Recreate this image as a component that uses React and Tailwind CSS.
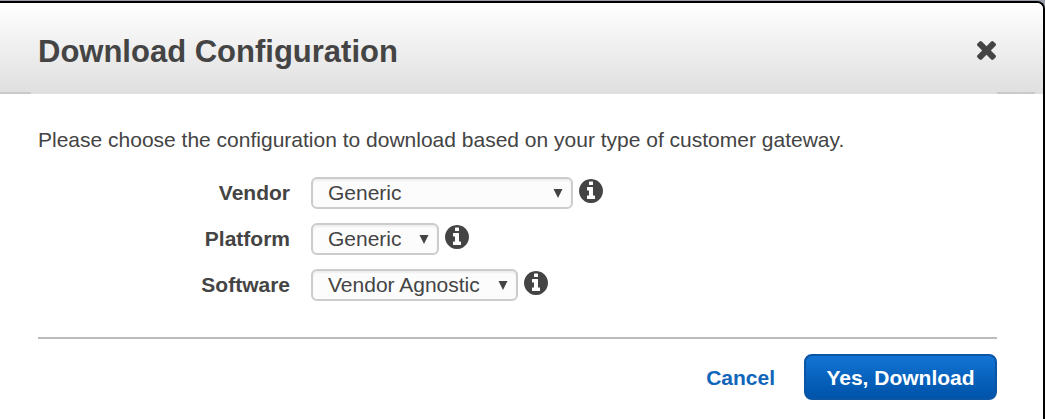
import React from "react";

function CloseIcon() {
  return (
    <svg viewBox="302 366 1188 1188" className="size-[19px] fill-current" aria-hidden="true">
      <path d="M1490 1322q0 40-28 68l-136 136q-28 28-68 28t-68-28l-294-294-294 294q-28 28-68 28t-68-28l-136-136q-28-28-28-68t28-68l294-294-294-294q-28-28-28-68t28-68l136-136q28-28 68-28t68 28l294 294 294-294q28-28 68-28t68 28l136 136q28 28 28 68t-28 68l-294 294 294 294q28 28 28 68z" />
    </svg>
  );
}

function InfoIcon() {
  return (
    <svg viewBox="128 128 1536 1536" className="size-6 fill-current" aria-hidden="true">
      <path d="M1152 1376v-160q0-14-9-23t-23-9h-96v-512q0-14-9-23t-23-9h-320q-14 0-23 9t-9 23v160q0 14 9 23t23 9h96v320h-96q-14 0-23 9t-9 23v160q0 14 9 23t23 9h448q14 0 23-9t9-23zm-128-896v-160q0-14-9-23t-23-9h-192q-14 0-23 9t-9 23v160q0 14 9 23t23 9h192q14 0 23-9t9-23zm640 416q0 209-103 385.5t-279.5 279.5-385.5 103-385.5-103-279.5-279.5-103-385.5 103-385.5 279.5-279.5 385.5-103 385.5 103 279.5 279.5 103 385.5z" />
    </svg>
  );
}

const fields = [
  { id: "vendor", label: "Vendor", value: "Generic", width: "w-[262px]" },
  { id: "platform", label: "Platform", value: "Generic", width: "w-[128px]" },
  { id: "software", label: "Software", value: "Vendor Agnostic", width: "w-[207px]" },
];

function Field({ id, label, value, width }) {
  return (
    <div className="flex items-start">
      <label htmlFor={id} className="w-[252px] shrink-0 text-right font-bold leading-8">
        {label}
      </label>
      <div className={`relative ml-[21px] ${width}`}>
        <select
          id={id}
          className="block h-8 w-full appearance-none rounded-md border-2 border-[#cccccc] bg-[#fcfcfc] pl-[15px] pr-6 leading-7 shadow-[inset_0_2px_2px_#eeeeee]"
        >
          <option>{value}</option>
        </select>
        <svg
          viewBox="0 0 10 9"
          className="pointer-events-none absolute right-2.5 top-3 h-[9px] w-[10px] fill-current"
          aria-hidden="true"
        >
          <path d="M0.5 0h9L5 9z" />
        </svg>
      </div>
      <button type="button" aria-label={`About ${label}`} className="ml-1.5 mt-0.5">
        <InfoIcon />
      </button>
    </div>
  );
}

export default function App() {
  return (
    <div className="flex min-h-screen flex-col bg-[#9a9ea8] pt-px font-['Liberation_Sans',Arial,sans-serif] text-[21px] text-[#444444]">
      <main
        role="dialog"
        aria-labelledby="title"
        className="flex-1 overflow-hidden rounded-tr-[8px] border-r-2 border-t-2 border-black bg-white"
      >
        <header className="bg-linear-to-b from-white to-[#dfdfdf]">
          <div className="flex h-[89px] items-center justify-between pl-[38px] pr-[47px] pt-1.5">
            <h1 id="title" className="pt-0.5 text-[31px] font-bold leading-10">
              Download Configuration
            </h1>
            <button type="button" aria-label="Close">
              <CloseIcon />
            </button>
          </div>
          <div className="flex justify-between pr-2">
            <div className="h-0.5 w-[31px] bg-[#cacaca]" />
            <div className="h-0.5 w-[38px] bg-[#cacaca]" />
          </div>
        </header>

        <form className="pl-[38px] pr-[46px] pt-8" onSubmit={(e) => e.preventDefault()}>
          <p className="leading-7">
            Please choose the configuration to download based on your type of customer gateway.
          </p>
          <div className="mt-[23px] flex flex-col gap-3.5">
            {fields.map((field) => (
              <Field key={field.id} {...field} />
            ))}
          </div>
          <div className="mt-9 flex items-center justify-end gap-[29px] border-t-2 border-[#bbbbbb] pt-[15px]">
            <button type="button" className="pt-0.5 font-bold text-[#1166bb]">
              Cancel
            </button>
            <button
              type="submit"
              className="h-[46px] min-w-[193px] rounded-lg border-2 border-[#0a55a5] bg-linear-to-b from-[#1374d4] to-[#0053a9] px-5 pt-0.5 font-bold text-white"
            >
              Yes, Download
            </button>
          </div>
        </form>
      </main>
    </div>
  );
}
